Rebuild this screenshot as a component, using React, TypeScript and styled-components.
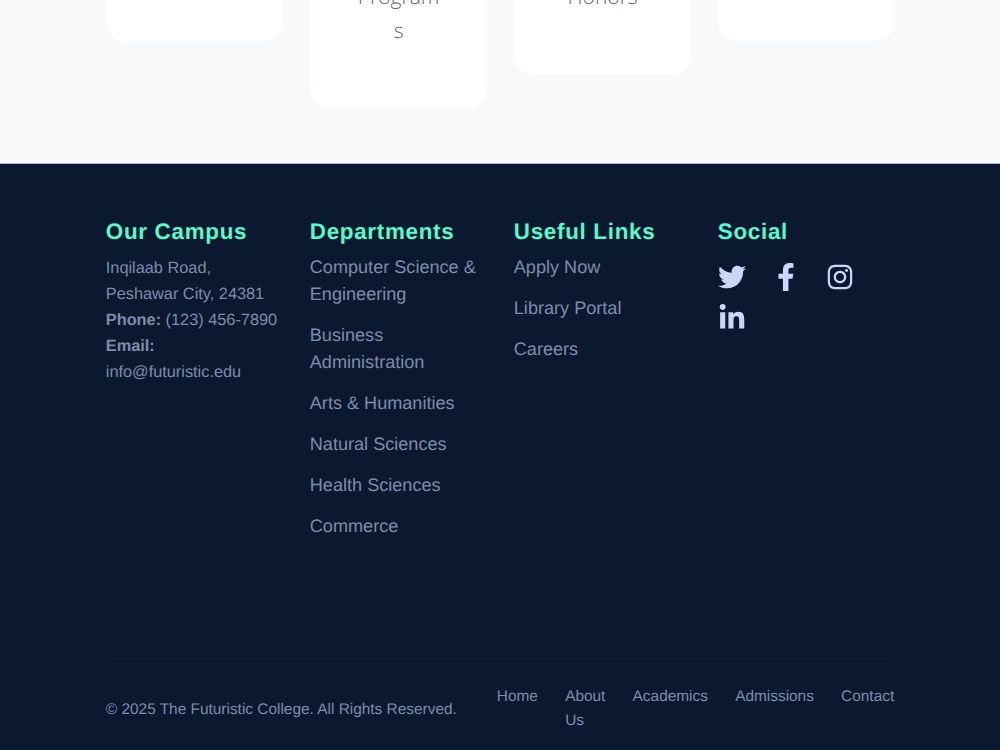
import React from "react";
import styled, { createGlobalStyle } from "styled-components";
import { FaTwitter, FaFacebookF, FaInstagram, FaLinkedinIn } from "react-icons/fa";

const Global = createGlobalStyle`
  html, body { margin: 0; padding: 0; background: #f8f9fa; }
  body {
    font-family: "Liberation Sans", Arial, sans-serif;
    width: 1000px;
    height: 750px;
    overflow: hidden;
    text-rendering: geometricPrecision;
  }
`;

const Stats = styled.section`
  height: 163px;
  box-sizing: border-box;
  background: #f8f9fa;
  overflow: hidden;
  display: flex;
  flex-direction: column;
  justify-content: flex-end;
  padding: 0 105.8px 54px;
`;
const StatGrid = styled.div`
  display: grid;
  grid-template-columns: repeat(4, 177.5px);
  column-gap: 26.5px;
  align-items: start;
  flex: none;
`;
const StatCard = styled.div`
  background: #fff;
  border-radius: 20px;
  padding-bottom: 60px;
  text-align: center;
`;
const StatLabel = styled.div`
  font-family: "Open Sans", sans-serif;
  font-weight: 300;
  font-size: 21px;
  line-height: 33px;
  padding-bottom: 1px;
  color: #666;
`;

const Footer = styled.footer`
  background: #0a192f;
  border-top: 1px solid #b4bac2;
  height: 587px;
  box-sizing: border-box;
  padding: 0 105.8px;
  display: flex;
  flex-direction: column;
`;
const Columns = styled.div`
  display: grid;
  grid-template-columns: repeat(4, 177.5px);
  column-gap: 26.5px;
  padding-top: 54px;
  height: 495px;
  box-sizing: border-box;
  border-bottom: 1px solid #0f1f38;
  flex: none;
`;
const Heading = styled.h4`
  margin: 0 0 8px;
  font-size: 22.4px;
  line-height: 28px;
  font-weight: 700;
  letter-spacing: 0.7px;
  color: #55fbcc;
`;
const Address = styled.p`
  margin: 0;
  padding-top: 0.7px;
  font-size: 16.32px;
  line-height: 26.1px;
  color: #808bab;
`;
const LinkList = styled.ul`
  list-style: none;
  margin: 0;
  padding: 0;
  display: flex;
  flex-direction: column;
  gap: 14px;
`;
const LinkItem = styled.a`
  display: block;
  font-size: 18.1px;
  line-height: 27px;
  color: #808bab;
  text-decoration: none;
`;
const Icons = styled.div`
  display: flex;
  flex-wrap: wrap;
  column-gap: 26.2px;
  padding-top: 3px;
`;
const IconLink = styled.a`
  display: flex;
  align-items: center;
  height: 40.5px;
  font-size: 28px;
  color: #ccd6f6;
`;
const Bottom = styled.div`
  flex: 1;
  display: flex;
  justify-content: space-between;
  align-items: center;
  padding-top: 8px;
`;
const Copy = styled.p`
  margin: 2px 0 0;
  font-size: 15.42px;
  color: #808bab;
`;
const Nav = styled.nav`
  display: flex;
  gap: 27.2px;
  align-items: flex-start;
`;
const NavLink = styled.a<{ $wrap?: boolean }>`
  font-size: 15.42px;
  line-height: 24px;
  color: #808bab;
  text-decoration: none;
  width: ${(p) => (p.$wrap ? "min-content" : "auto")};
`;

export default function App() {
  return (
    <>
      <Global />
      <Stats>
        <StatGrid>
          <StatCard />
          <StatCard>
            <StatLabel>Program</StatLabel>
            <StatLabel>s</StatLabel>
          </StatCard>
          <StatCard>
            <StatLabel>Honors</StatLabel>
          </StatCard>
          <StatCard />
        </StatGrid>
      </Stats>
      <Footer>
        <Columns>
          <div>
            <Heading>Our Campus</Heading>
            <Address>
              Inqilaab Road,
              <br />
              Peshawar City, 24381
              <br />
              <strong>Phone:</strong> (123) 456-7890
              <br />
              <strong>Email:</strong> info@futuristic.edu
            </Address>
          </div>
          <div>
            <Heading>Departments</Heading>
            <LinkList>
              {[
                "Computer Science & Engineering",
                "Business Administration",
                "Arts & Humanities",
                "Natural Sciences",
                "Health Sciences",
                "Commerce",
              ].map((t) => (
                <li key={t}>
                  <LinkItem href="#">{t}</LinkItem>
                </li>
              ))}
            </LinkList>
          </div>
          <div>
            <Heading>Useful Links</Heading>
            <LinkList>
              {["Apply Now", "Library Portal", "Careers"].map((t) => (
                <li key={t}>
                  <LinkItem href="#">{t}</LinkItem>
                </li>
              ))}
            </LinkList>
          </div>
          <div>
            <Heading>Social</Heading>
            <Icons>
              <IconLink href="#"><FaTwitter /></IconLink>
              <IconLink href="#"><FaFacebookF /></IconLink>
              <IconLink href="#"><FaInstagram /></IconLink>
              <IconLink href="#"><FaLinkedinIn /></IconLink>
            </Icons>
          </div>
        </Columns>
        <Bottom>
          <Copy>© 2025 The Futuristic College. All Rights Reserved.</Copy>
          <Nav>
            <NavLink href="#">Home</NavLink>
            <NavLink href="#" $wrap>About Us</NavLink>
            <NavLink href="#">Academics</NavLink>
            <NavLink href="#">Admissions</NavLink>
            <NavLink href="#">Contact</NavLink>
          </Nav>
        </Bottom>
      </Footer>
    </>
  );
}
